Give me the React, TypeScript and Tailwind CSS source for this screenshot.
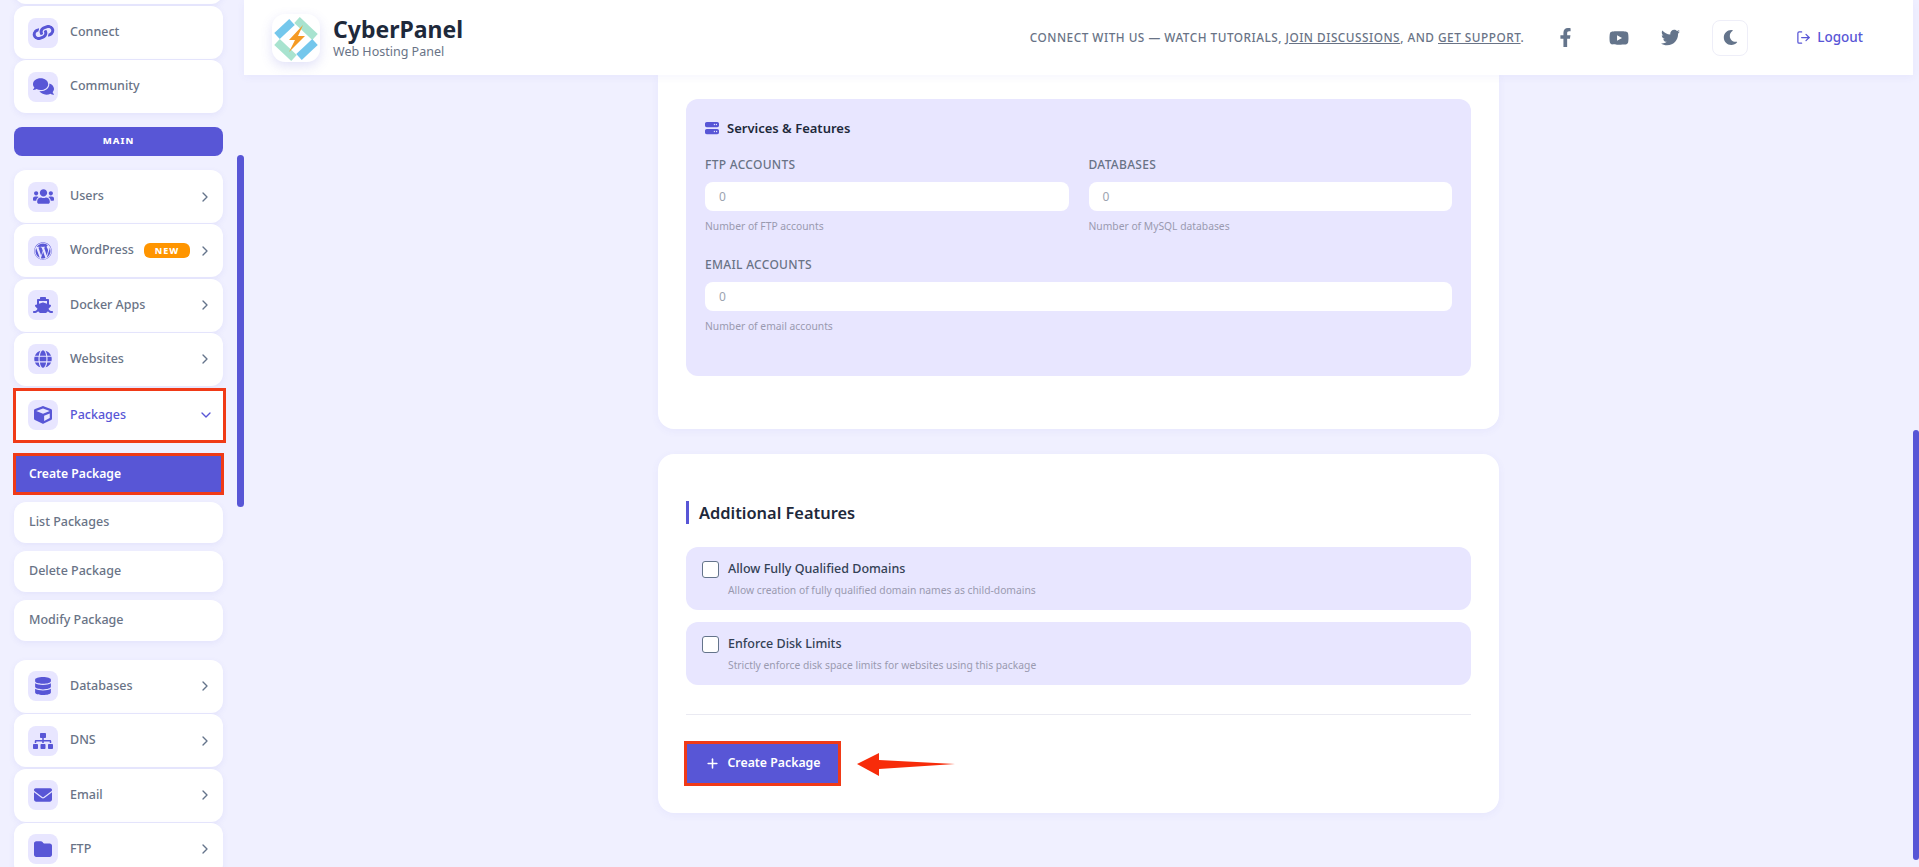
import {
  FaComments,
  FaCube,
  FaDatabase,
  FaFacebookF,
  FaGlobe,
  FaLink,
  FaMoon,
  FaShip,
  FaSitemap,
  FaTwitter,
  FaUsers,
  FaWordpress,
  FaYoutube,
} from 'react-icons/fa';
import { FaEnvelope, FaFolder, FaServer } from 'react-icons/fa6';
import { ChevronDown, ChevronRight, LogOut, Plus } from 'lucide-react';
import type { ComponentType, ReactNode } from 'react';

type NavProps = {
  icon: ComponentType<{ className?: string }>;
  label: string;
  iconClass?: string;
  arrow?: boolean;
  badge?: boolean;
};

function NavItem({ icon: Icon, label, iconClass = 'h-[18px] w-[18px]', arrow = true, badge }: NavProps) {
  return (
    <div className="flex h-[53px] shrink-0 items-center rounded-xl bg-white pl-[14px] pr-[10px] shadow-[0_2px_6px_rgba(88,86,214,0.08)]">
      <span className="flex h-[30px] w-[30px] items-center justify-center rounded-lg bg-[#e8e6ff]">
        <Icon className={`text-[#5856d6] ${iconClass}`} />
      </span>
      <span className="ml-3 text-[12.5px] font-medium text-[#697386]">{label}</span>
      {badge && (
        <span className="ml-auto flex h-[15px] w-[46px] items-center justify-center rounded-md bg-[#ff9500] text-[9px] font-extrabold tracking-[1px] text-white">NEW</span>
      )}
      {arrow && <ChevronRight className={`h-4 w-4 text-[#64748b] ${badge ? 'ml-[7px]' : 'ml-auto'}`} />}
    </div>
  );
}

function SubItem({ label }: { label: string }) {
  return (
    <div className="flex h-[41px] items-center rounded-xl bg-white pl-[15px] text-[12.5px] font-medium text-[#697386] shadow-[0_2px_6px_rgba(88,86,214,0.08)]">
      {label}
    </div>
  );
}

function Sidebar() {
  return (
    <aside className="relative flex h-full w-[244px] shrink-0 flex-col overflow-hidden pl-[14px] pr-[21px]">
      <div className="absolute right-0 top-[155px] h-[352px] w-[7px] rounded-full bg-[#5856d6]" />
      <div className="-mt-[47px] flex flex-col gap-[1px]">
        <div className="h-[51px] rounded-xl bg-white shadow-[0_2px_6px_rgba(88,86,214,0.08)]" />
        <div className="mt-[1px]">
          <NavItem icon={FaLink} label="Connect" arrow={false} iconClass="h-[19px] w-[19px] rotate-[25deg]" />
        </div>
        <NavItem icon={FaComments} label="Community" arrow={false} iconClass="h-[21px] w-[21px]" />
      </div>
      <div className="mt-[14px] flex h-[29px] shrink-0 items-center justify-center rounded-lg bg-[#5856d6] text-[9.5px] font-extrabold tracking-[1px] text-white">
        MAIN
      </div>
      <div className="mt-[14px] flex flex-col gap-[1.33px]">
        <NavItem icon={FaUsers} label="Users" iconClass="h-[21px] w-[21px]" />
        <NavItem icon={FaWordpress} label="WordPress" badge />
        <NavItem icon={FaShip} label="Docker Apps" iconClass="h-[20px] w-[20px]" />
        <NavItem icon={FaGlobe} label="Websites" />
      </div>
      <div className="mt-[2px] -mr-[3px] -ml-[1px] shrink-0 border-[3px] border-[#f03a17]">
        <div className="flex h-[49px] items-center bg-white pl-[12px] pr-[9px]">
          <span className="flex h-[30px] w-[30px] items-center justify-center rounded-lg bg-[#e8e6ff]">
            <FaCube className="h-[18px] w-[18px] text-[#5856d6]" />
          </span>
          <span className="ml-3 text-[12.5px] font-medium text-[#5856d6]">Packages</span>
          <ChevronDown className="ml-auto h-4 w-4 text-[#5856d6]" />
        </div>
      </div>
      <div className="mt-[10px] -mx-[1px] flex h-[42px] shrink-0 items-center border-[3px] border-[#f03a17] bg-[#5856d6] pl-[13px] text-[12.2px] font-semibold text-white">
        Create Package
      </div>
      <div className="mt-[7px] flex flex-col gap-[8px]">
        <SubItem label="List Packages" />
        <SubItem label="Delete Package" />
        <SubItem label="Modify Package" />
      </div>
      <div className="mt-[19px] flex flex-col gap-[1.33px]">
        <NavItem icon={FaDatabase} label="Databases" />
        <NavItem icon={FaSitemap} label="DNS" iconClass="h-[20px] w-[20px]" />
        <NavItem icon={FaEnvelope} label="Email" />
        <NavItem icon={FaFolder} label="FTP" />
      </div>
    </aside>
  );
}

function Logo() {
  return (
    <div className="flex h-[48px] w-[48px] items-center justify-center rounded-[13px] bg-white shadow-[0_4px_12px_rgba(88,86,214,0.18)]">
      <svg viewBox="0 0 48 48" className="h-[48px] w-[48px]">
        <path d="M5 22 20 8" stroke="#74c7ec" strokeWidth="8" />
        <path d="M25 6 43 23" stroke="#a8e3cf" strokeWidth="8" />
        <path d="M43 28 27 43" stroke="#74c7ec" strokeWidth="8" />
        <path d="M5 28 22 44" stroke="#a8e3cf" strokeWidth="8" />
        <path d="M31 11 17 26h6l-6 12 16-16h-7z" fill="#f59a23" />
      </svg>
    </div>
  );
}

function Header() {
  return (
    <header className="relative z-10 flex h-[75px] shrink-0 items-center bg-white pl-[28px] pr-[50px] shadow-[0_2px_8px_rgba(88,86,214,0.06)]">
      <Logo />
      <div className="ml-[13px]">
        <div className="text-[23px] leading-[28px] font-bold text-[#1e293b]">CyberPanel</div>
        <div className="text-[12.5px] leading-[17px] text-[#697386]">Web Hosting Panel</div>
      </div>
      <div className="ml-auto text-[11.8px] font-medium tracking-[0.5px] text-[#697386]">
        CONNECT WITH US — WATCH TUTORIALS, <span className="underline">JOIN DISCUSSIONS</span>, AND <span className="underline">GET SUPPORT</span>.
      </div>
      <FaFacebookF className="ml-[32px] h-[19px] w-[19px] text-[#64748b]" />
      <FaYoutube className="ml-[34px] h-[20px] w-[20px] text-[#64748b]" />
      <FaTwitter className="ml-[32px] h-[19px] w-[19px] text-[#64748b]" />
      <div className="ml-[32px] flex h-[36px] w-[36px] items-center justify-center rounded-lg border border-[#eeeef8] bg-white">
        <FaMoon className="h-[15px] w-[15px] text-[#64748b]" />
      </div>
      <div className="ml-[48px] flex items-center gap-[6px] text-[13.5px] font-medium text-[#5856d6]">
        <LogOut className="h-[15px] w-[15px]" />
        Logout
      </div>
    </header>
  );
}

function NumberField({ label, hint, className = '' }: { label: string; hint: string; className?: string }) {
  return (
    <div className={className}>
      <div className="text-[12px] leading-[16px] font-medium tracking-[0.3px] text-[#697386]">{label}</div>
      <div className="mt-[9px] flex h-[29px] items-center rounded-lg bg-white pl-[14px] text-[12px] text-[#9ca3af]">0</div>
      <div className="mt-[8px] text-[10.3px] leading-[14px] text-[#9a9ab0]">{hint}</div>
    </div>
  );
}

function CheckRow({ title, hint }: { title: string; hint: string }) {
  return (
    <div className="flex h-[63px] rounded-xl bg-[#e8e6ff] pl-4 pt-[14px]">
      <span className="h-[17px] w-[17px] shrink-0 rounded-[3px] border border-[#64748b] bg-white" />
      <div className="ml-[9px]">
        <div className="text-[12.5px] leading-[16px] font-medium text-[#334155]">{title}</div>
        <div className="mt-[6px] text-[10.3px] leading-[14px] text-[#9a9ab0]">{hint}</div>
      </div>
    </div>
  );
}

function Card({ children, className = '' }: { children: ReactNode; className?: string }) {
  return <section className={`w-[841px] bg-white px-7 shadow-[0_2px_8px_rgba(88,86,214,0.06)] ${className}`}>{children}</section>;
}

export default function App() {
  return (
    <div className="relative flex h-screen overflow-hidden bg-[#f0f0ff] font-['Noto_Sans',sans-serif]">
      <Sidebar />
      <div className="flex min-w-0 flex-1 flex-col pr-[6px]">
        <Header />
        <main className="flex flex-col pl-[414px]">
          <Card className="rounded-b-2xl pt-6 pb-[53px]">
            <div className="h-[277px] rounded-xl bg-[#e8e6ff] px-[19px] pt-[19px]">
              <div className="flex items-center gap-2 text-[13px] leading-[20px] font-semibold text-[#1e293b]">
                <FaServer className="h-[14px] w-[14px] text-[#5856d6]" />
                Services &amp; Features
              </div>
              <div className="mt-[19px] grid grid-cols-2 gap-x-5">
                <NumberField label="FTP ACCOUNTS" hint="Number of FTP accounts" />
                <NumberField label="DATABASES" hint="Number of MySQL databases" />
                <NumberField label="EMAIL ACCOUNTS" hint="Number of email accounts" className="col-span-2 mt-[24px]" />
              </div>
            </div>
          </Card>
          <Card className="mt-[25px] h-[359px] rounded-2xl pt-[47px]">
            <h2 className="border-l-[3px] border-[#5856d6] pl-[10px] text-[16.4px] leading-[23px] font-semibold text-[#1e293b]">Additional Features</h2>
            <div className="mt-[23px] flex flex-col gap-3">
              <CheckRow title="Allow Fully Qualified Domains" hint="Allow creation of fully qualified domain names as child-domains" />
              <CheckRow title="Enforce Disk Limits" hint="Strictly enforce disk space limits for websites using this package" />
            </div>
            <div className="mt-[29px] border-t border-[#eaeaf2]" />
            <div className="relative mt-[26px] -ml-[2px] flex h-[45px] w-[157px] items-center justify-center gap-2 border-[3px] border-[#f03a17] bg-[#5856d6] text-[12.3px] font-semibold text-white">
              <Plus className="h-[15px] w-[15px]" strokeWidth={2.5} />
              Create Package
              <svg viewBox="0 0 98 23" className="absolute left-[170px] top-[9px] h-[23px] w-[98px]">
                <path d="M0 11 22 0v7l76 4-76 5v7z" fill="#f72c0a" />
              </svg>
            </div>
          </Card>
        </main>
      </div>
      <div className="absolute right-0 top-[430px] h-[430px] w-[6px] rounded-full bg-[#5856d6]" />
    </div>
  );
}
